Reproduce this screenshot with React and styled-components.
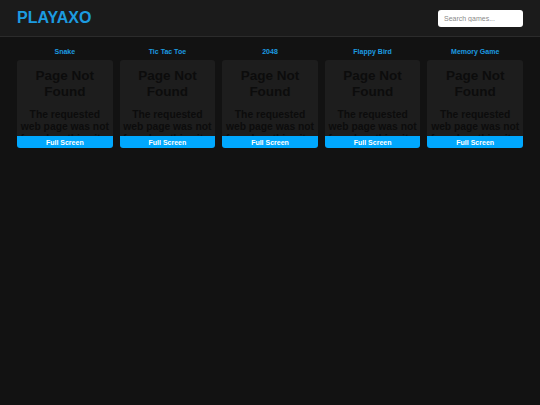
import React from "react";
import styled, { createGlobalStyle } from "styled-components";

const GlobalStyle = createGlobalStyle`
  html, body {
    margin: 0;
    padding: 0;
    background: #121212;
    font-family: "Liberation Sans", Arial, sans-serif;
  }
`;

const Page = styled.div`
  min-height: 405px;
  background: #121212;
`;

const Header = styled.header`
  height: 36px;
  display: flex;
  align-items: center;
  justify-content: space-between;
  padding: 0 17px;
  background: #1b1b1b;
  border-bottom: 1px solid #2b2b2b;
`;

const Logo = styled.div`
  font-size: 16px;
  font-weight: bold;
  color: #1c9be0;
`;

const Search = styled.input`
  width: 85px;
  height: 17px;
  box-sizing: border-box;
  border: none;
  border-radius: 3px;
  padding: 0 6px;
  font-size: 7px;
  font-family: "Liberation Sans", Arial, sans-serif;
  background: #fff;
  &::placeholder {
    color: #8a8a8a;
  }
`;

const Grid = styled.div`
  display: grid;
  grid-template-columns: repeat(5, 1fr);
  column-gap: 7px;
  padding: 10px 17px;
`;

const Card = styled.div`
  display: flex;
  flex-direction: column;
`;

const Title = styled.div`
  font-size: 7px;
  font-weight: bold;
  color: #1c9be0;
  text-align: center;
  height: 13px;
  line-height: 10px;
`;

const Frame = styled.div`
  height: 76px;
  overflow: hidden;
  background: #1d1d1d;
  border-radius: 3px 3px 0 0;
  color: #0c0c0c;
  text-align: center;
  font-weight: bold;
`;

const Heading = styled.div`
  font-size: 13.5px;
  line-height: 16px;
  margin-top: 8px;
`;

const Message = styled.div`
  font-size: 10.3px;
  line-height: 12px;
  margin-top: 9px;
  padding: 0 2px;
`;

const FullButton = styled.button`
  height: 12px;
  padding: 0;
  border: none;
  border-radius: 0 0 3px 3px;
  background: #00a8ff;
  color: #fff;
  font-size: 7px;
  font-weight: bold;
  font-family: "Liberation Sans", Arial, sans-serif;
  cursor: pointer;
`;

const games = ["Snake", "Tic Tac Toe", "2048", "Flappy Bird", "Memory Game"];

export default function App() {
  return (
    <Page>
      <GlobalStyle />
      <Header>
        <Logo>PLAYAXO</Logo>
        <Search placeholder="Search games..." />
      </Header>
      <Grid>
        {games.map(g => (
          <Card key={g}>
            <Title>{g}</Title>
            <Frame>
              <Heading>
                Page Not
                <br />
                Found
              </Heading>
              <Message>The requested web page was not found on this site.</Message>
            </Frame>
            <FullButton>Full Screen</FullButton>
          </Card>
        ))}
      </Grid>
    </Page>
  );
}
